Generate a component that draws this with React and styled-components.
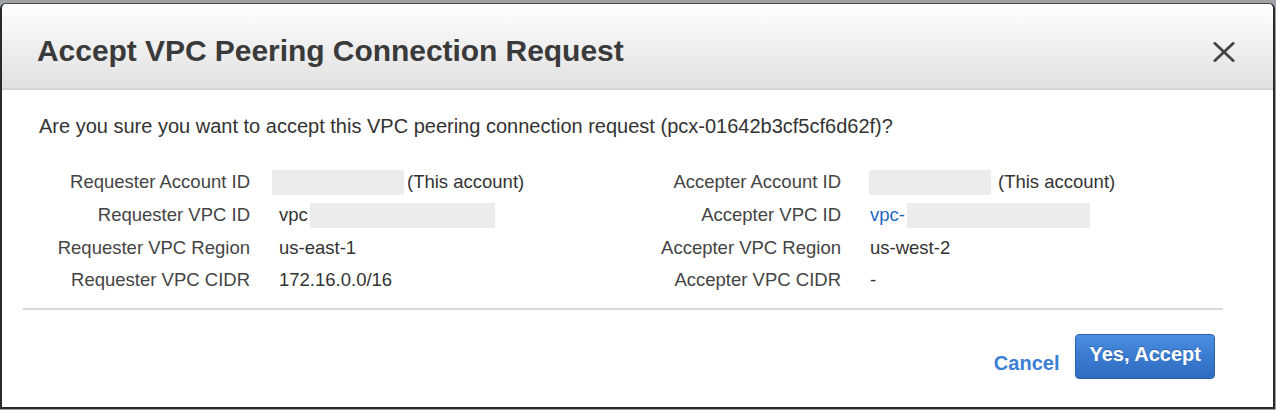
import styled, { createGlobalStyle } from 'styled-components'

const GlobalStyle = createGlobalStyle`
   html, body {
      margin: 0;
      padding: 0;
      background: #9ea3a8;
   }
   body {
      font-family: 'Liberation Sans', Arial, Helvetica, sans-serif;
   }
   * {
      box-sizing: border-box;
   }
`

const rows = [
   {
      left: { label: 'Requester Account ID', mask: 132, maskOffset: -7, suffix: '(This account)' },
      right: { label: 'Accepter Account ID', mask: 122, maskOffset: -1, suffix: '(This account)', gapAfter: 7 },
   },
   {
      left: { label: 'Requester VPC ID', prefix: 'vpc', mask: 185 },
      right: { label: 'Accepter VPC ID', prefix: 'vpc-', link: true, mask: 183 },
   },
   {
      left: { label: 'Requester VPC Region', text: 'us-east-1' },
      right: { label: 'Accepter VPC Region', text: 'us-west-2' },
   },
   {
      left: { label: 'Requester VPC CIDR', text: '172.16.0.0/16' },
      right: { label: 'Accepter VPC CIDR', text: '-' },
   },
]

const CloseIcon = () => (
   <svg width="22" height="20" viewBox="0 0 22 20">
      <path
         d="M2 1.5 L20 18.5 M20 1.5 L2 18.5"
         stroke="#444"
         strokeWidth="2.8"
         strokeLinecap="square"
         fill="none"
      />
   </svg>
)

const FieldValue = ({ field }) => {
   if (field.text) return <Value>{field.text}</Value>
   return (
      <Value>
         {field.prefix && <ValueText $link={field.link}>{field.prefix}</ValueText>}
         {field.mask && (
            <Mask
               $width={field.mask}
               $offset={field.maskOffset ?? 2}
               $after={field.gapAfter ?? 3}
            />
         )}
         {field.suffix && <ValueText>{field.suffix}</ValueText>}
      </Value>
   )
}

const App = () => {
   return (
      <>
         <GlobalStyle />
         <Page>
            <Dialog>
               <Header>
                  <Title>Accept VPC Peering Connection Request</Title>
                  <CloseButton aria-label="Close">
                     <CloseIcon />
                  </CloseButton>
               </Header>
               <Body>
                  <Question>
                     Are you sure you want to accept this VPC peering connection
                     request (pcx-01642b3cf5cf6d62f)?
                  </Question>
                  <DetailGrid>
                     {rows.map((row) => (
                        <Row key={row.left.label}>
                           <Field>
                              <Label>{row.left.label}</Label>
                              <FieldValue field={row.left} />
                           </Field>
                           <Field>
                              <Label>{row.right.label}</Label>
                              <FieldValue field={row.right} />
                           </Field>
                        </Row>
                     ))}
                  </DetailGrid>
               </Body>
               <Footer>
                  <CancelLink href="#">Cancel</CancelLink>
                  <PrimaryButton>Yes, Accept</PrimaryButton>
               </Footer>
            </Dialog>
         </Page>
      </>
   )
}

export default App

const Page = styled.div`
   width: 1276px;
   height: 410px;
   padding: 3px 1px 1px 0;
`

const Dialog = styled.div`
   height: 406px;
   background: #fff;
   border: 2px solid #2a2a2a;
   border-top: 1px solid #4a4a4a;
   border-radius: 6px 6px 0 0;
   overflow: hidden;
   display: flex;
   flex-direction: column;
`

const Header = styled.div`
   height: 86px;
   flex-shrink: 0;
   display: flex;
   align-items: center;
   justify-content: space-between;
   padding: 0 38px 0 35px;
   background: linear-gradient(to bottom, #ffffff 0%, #f1f1f1 45%, #e1e1e1 100%);
   border-bottom: 2px solid #d4d4d4;
`

const Title = styled.h1`
   margin: 0;
   padding-top: 9px;
   font-size: 30px;
   font-weight: bold;
   color: #3a3a3a;
   letter-spacing: -0.05px;
`

const CloseButton = styled.button`
   border: none;
   background: none;
   padding: 0;
   margin-top: 12px;
   display: flex;
   cursor: pointer;
`

const Body = styled.div`
   padding: 24px 0 0 37px;
`

const Question = styled.p`
   margin: 0;
   font-size: 20px;
   line-height: 24px;
   color: #333;
`

const DetailGrid = styled.div`
   margin-top: 28px;
   display: flex;
   flex-direction: column;
`

const Row = styled.div`
   display: grid;
   grid-template-columns: 591px 591px;
   height: 32.7px;
`

const Field = styled.div`
   display: grid;
   grid-template-columns: 211px 1fr;
   column-gap: 29px;
   align-items: center;
`

const Label = styled.div`
   text-align: right;
   font-size: 18.5px;
   color: #444;
   white-space: nowrap;
`

const Value = styled.div`
   display: flex;
   align-items: center;
   font-size: 18.5px;
   color: #333;
   white-space: nowrap;
`

const ValueText = styled.span`
   color: ${(p) => (p.$link ? '#1f68c2' : '#333')};
`

const Mask = styled.span`
   display: inline-block;
   width: ${(p) => p.$width}px;
   height: 25px;
   background: #ececec;
   margin-left: ${(p) => p.$offset}px;
   margin-right: ${(p) => p.$after}px;
`

const Footer = styled.div`
   margin: 11px 50px 0 21px;
   border-top: 2px solid #d8d8d8;
   padding: 24px 8px 0 0;
   display: flex;
   justify-content: flex-end;
   align-items: flex-end;
   gap: 16px;
`

const CancelLink = styled.a`
   font-size: 20px;
   font-weight: bold;
   line-height: 24px;
   color: #3b7fd6;
   text-decoration: none;
   padding-bottom: 4px;
`

const PrimaryButton = styled.button`
   height: 45px;
   padding: 0 13px 3px;
   font-family: 'Liberation Sans', Arial, Helvetica, sans-serif;
   font-size: 20px;
   font-weight: bold;
   color: #fff;
   background: linear-gradient(to bottom, #4c8fe0 0%, #3a7bd0 50%, #2f6cc0 100%);
   border: 1px solid #2b60aa;
   border-radius: 4px;
   text-shadow: 0 -1px 0 rgba(0, 0, 0, 0.25);
   cursor: pointer;
`
